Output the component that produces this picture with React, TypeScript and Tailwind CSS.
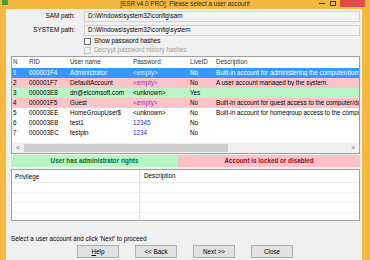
import React from "react"

type Row = {
  n: string
  rid: string
  user: string
  pass: string
  live: string
  desc: string
  kind: "sel" | "pink" | "green" | "plain"
  passColor: string
}

const rows: Row[] = [
  { n: "1", rid: "000001F4", user: "Administrator", pass: "<empty>", live: "No", desc: "Built-in account for administering the computer/domain", kind: "sel", passColor: "text-[#f0e6ff]" },
  { n: "2", rid: "000001F7", user: "DefaultAccount", pass: "<empty>", live: "No", desc: "A user account managed by the system.", kind: "pink", passColor: "text-[#9b30c8]" },
  { n: "3", rid: "000003E8", user: "dn@elcomsoft.com", pass: "<unknown>", live: "Yes", desc: "", kind: "green", passColor: "text-black" },
  { n: "4", rid: "000001F5", user: "Guest", pass: "<empty>", live: "No", desc: "Built-in account for guest access to the computer/domain", kind: "pink", passColor: "text-[#9b30c8]" },
  { n: "5", rid: "000003EE", user: "HomeGroupUser$", pass: "<unknown>", live: "No", desc: "Built-in account for homegroup access to the computer", kind: "plain", passColor: "text-black" },
  { n: "6", rid: "000003EB", user: "test1", pass: "12345", live: "No", desc: "", kind: "plain", passColor: "text-[#2b2bc8]" },
  { n: "7", rid: "000003EC", user: "testpin", pass: "1234", live: "No", desc: "", kind: "plain", passColor: "text-[#2b2bc8]" },
]

const rowBg: Record<Row["kind"], string> = {
  sel: "bg-[#3399ff] text-white",
  pink: "bg-[#fcc3c9] text-black",
  green: "bg-[#baf5c6] text-black",
  plain: "bg-white text-black",
}

const cols = "grid grid-cols-[16px_41px_63px_57px_26px_minmax(0,1fr)]"

function Button({ children }: { children: React.ReactNode }) {
  return (
    <div className="flex h-[13px] w-[42px] items-center justify-center border border-[#adadad] bg-[#e1e1e1] text-black">
      {children}
    </div>
  )
}

export default function App() {
  return (
    <div
      className="flex h-[260px] w-[370px] flex-col overflow-hidden bg-[#f4b73f] text-[6.3px] leading-none text-black"
      style={{ fontFamily: "'Liberation Sans', Arial, sans-serif" }}
    >
      {/* title bar */}
      <div className="relative flex h-[9px] shrink-0 items-center justify-center">
        <div className="absolute left-[2px] top-0 h-[5px] w-[6px] bg-[#4f9a3a]" />
        <span className="text-[#2a2a2a]">[ESR v4.0 PRO]&nbsp;&nbsp;Please select a user account</span>
        <div className="absolute right-[5px] top-0 flex h-[8px] items-start">
          <div className="mr-[5px] mt-[3px] h-[1px] w-[6px] bg-[#3a3a3a]" />
          <div className="mr-[4px] mt-[1px] h-[5px] w-[6px] border border-[#3a3a3a]" />
          <div className="h-[7px] w-[25px] bg-[#e04a4a]" />
        </div>
      </div>

      {/* client area */}
      <div className="ml-[6px] mr-[8px] flex flex-1 flex-col bg-[#f0f0f0] pl-[5px] pr-[2px]">
        <div className="mt-[2px] flex flex-col gap-[3px]">
          {[
            ["SAM path:", "D:\\Windows\\system32\\config\\sam"],
            ["SYSTEM path:", "D:\\Windows\\system32\\config\\system"],
          ].map(([label, value]) => (
            <div key={label} className="flex items-center">
              <div className="w-[64px] text-right">{label}</div>
              <div className="ml-[9px] flex h-[11px] flex-1 items-center border border-[#d2d2d2] bg-[#f3f3f3] pl-[3px]">
                {value}
              </div>
            </div>
          ))}
        </div>
        <div className="ml-[73px] mt-[1px] flex h-[9px] items-center gap-[3px]">
          <div className="h-[7px] w-[7px] border border-[#707070] bg-white" />
          <span>Show password hashes</span>
        </div>
        <div className="ml-[73px] flex h-[9px] items-center gap-[3px] text-[#a0a0a0]">
          <div className="h-[7px] w-[7px] border border-[#c8c8c8] bg-[#f0f0f0]" />
          <span>Decrypt password history hashes</span>
        </div>

        {/* users table */}
        <div className="mt-[1px] flex h-[98px] shrink-0 flex-col overflow-hidden border border-[#a0a0a0] bg-white">
          <div className={`${cols} h-[11px] shrink-0 items-center bg-white text-[#333]`}>
            <div className="pl-[1px]">N</div>
            <div className="pl-[1px]">RID</div>
            <div className="pl-[1px]">User name</div>
            <div className="pl-[1px]">Password</div>
            <div className="pl-[1px]">LiveID</div>
            <div className="pl-[1px]">Description</div>
          </div>
          {rows.map((r) => (
            <div key={r.n} className={`${cols} h-[10px] shrink-0 items-center whitespace-nowrap ${rowBg[r.kind]}`}>
              <div className="pl-[1px]">{r.n}</div>
              <div className="pl-[1px]">{r.rid}</div>
              <div className="pl-[1px]">{r.user}</div>
              <div className={`pl-[1px] ${r.passColor}`}>{r.pass}</div>
              <div className="pl-[1px]">{r.live}</div>
              <div className="overflow-hidden pl-[1px]">{r.desc}</div>
            </div>
          ))}
          <div className="flex-1" />
          <div className="flex h-[10px] shrink-0 items-center bg-[#f0f0f0] text-[#606060]">
            <div className="w-[12px] text-center">&lt;</div>
            <div className="h-[8px] w-[204px] bg-[#cdcdcd]" />
            <div className="flex-1" />
            <div className="w-[12px] text-center">&gt;</div>
          </div>
        </div>

        {/* status */}
        <div className="mt-[1px] flex h-[12px] shrink-0 font-bold">
          <div className="flex w-[167px] items-center justify-center bg-[#b6f5c4] text-[#0f6a22]">
            User has administrator rights
          </div>
          <div className="flex flex-1 items-center justify-center bg-[#fec0c7] text-[#8a1020]">
            Account is locked or disabled
          </div>
        </div>

        {/* privileges */}
        <div className="mt-[2px] flex h-[52px] shrink-0 flex-col border border-[#a0a0a0] bg-white">
          <div className="grid h-[13px] grid-cols-[128px_1fr] items-center border-b border-[#ededed]">
            <div className="border-r border-[#e3e3e3] pl-[3px] leading-[13px]">Privilege</div>
            <div className="pl-[4px]">Description</div>
          </div>
          {[0, 1, 2].map((i) => (
            <div key={i} className="grid h-[10px] grid-cols-[128px_1fr] border-b border-[#f2f2f2]">
              <div className="border-r border-[#e3e3e3]" />
              <div />
            </div>
          ))}
          <div className="grid flex-1 grid-cols-[128px_1fr]">
            <div className="border-r border-[#e3e3e3]" />
            <div />
          </div>
        </div>

        <div className="mt-[15px]">Select a user account and click 'Next' to proceed</div>

        <div className="ml-[66px] mt-[3px] flex gap-[16px]">
          <Button>
            <span className="underline">H</span>elp
          </Button>
          <Button>&lt;&lt; Back</Button>
          <Button>Next &gt;&gt;</Button>
          <Button>Close</Button>
        </div>
      </div>
    </div>
  )
}
